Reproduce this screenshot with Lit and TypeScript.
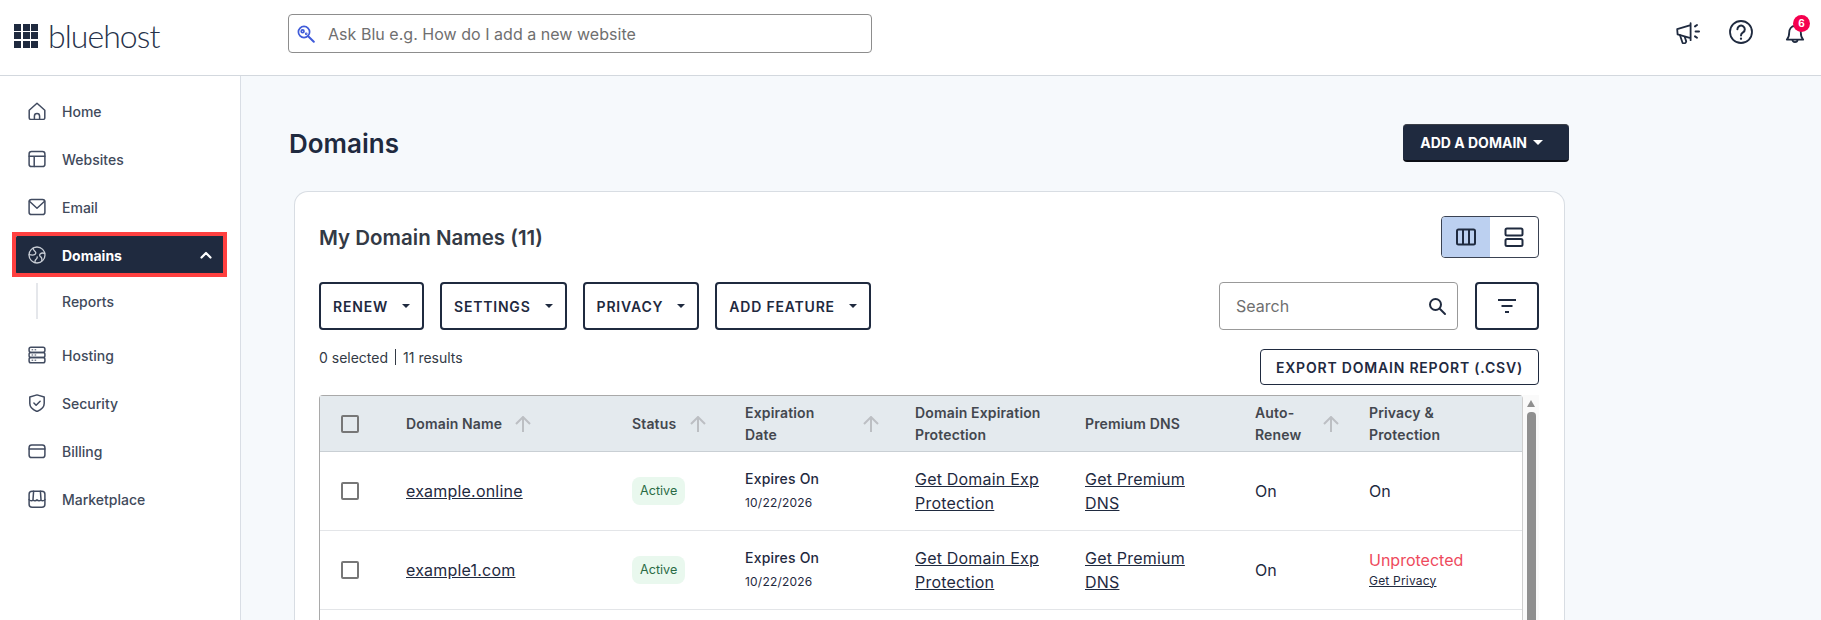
import { LitElement, html, css, svg } from "lit";
import { customElement } from "lit/decorators.js";

const navIcons: Record<string, unknown> = {
  home: svg`<path d="M1.2 8.2 9 1.2l7.8 7v7.6a1.6 1.6 0 0 1-1.6 1.6H2.8a1.6 1.6 0 0 1-1.6-1.6z"/><path d="M6.4 17.4v-3.2a2.6 2.6 0 0 1 5.2 0v3.2"/>`,
  websites: svg`<rect x="1.1" y="1.6" width="15.8" height="15" rx="2.4"/><path d="M1.1 6.2h15.8M6.2 6.2v10.4"/>`,
  email: svg`<rect x="1.1" y="1.6" width="15.8" height="15" rx="2.4"/><path d="M1.4 3.2 9 10.2l7.6-7"/>`,
  globe: svg`<circle cx="9" cy="9" r="8"/><path d="M5 2.2c.2 1.7 1.2 2.5 2.2 3.4 1 1 .6 2.2-.4 2.9-1 .7-3.4.6-5.6.2M16.8 7.4c-1.8-.6-3.6-.4-4.6.6-1 1-.4 2.2.6 2.9 1 .7 1.3 1.9.9 3.5M7 16.7c-.2-1.6.2-2.8 1.1-3.5.8-.7 1.4-1.2 1.1-2.4"/>`,
  hosting: svg`<rect x="1.1" y="1.2" width="15.8" height="5.2" rx="1.8"/><rect x="1.1" y="6.4" width="15.8" height="5.2" rx="1.8"/><rect x="1.1" y="11.6" width="15.8" height="5.2" rx="1.8"/><path d="M4 3.8h.8M7 3.8h.8M4 9h.8M7 9h.8M4 14.2h.8M7 14.2h.8" stroke-width="1"/>`,
  security: svg`<path d="M9 .9 16.2 3v6.6c0 3.6-3 6.3-7.2 7.9-4.2-1.6-7.2-4.3-7.2-7.9V3z"/><path d="m5.9 9 2.2 2.2 4-4"/>`,
  billing: svg`<rect x="1.1" y="3" width="15.8" height="12.6" rx="2.6"/><path d="M1.1 7h15.8"/>`,
  market: svg`<rect x="1.1" y="1.2" width="15.8" height="16" rx="3"/><path d="M1.1 9.6c1.3 1.6 3.1 1.6 4 .2.8 1.3 2.9 1.4 3.9 0 1 1.4 3.1 1.3 3.9 0 .9 1.4 2.7 1.4 4-.2M5.6 1.2 5 9.6M12.4 1.2l.6 8.4"/>`,
};

type NavItem = { label: string; icon: string; active?: boolean; sub?: string };

const navItems: NavItem[] = [
  { label: "Home", icon: "home" },
  { label: "Websites", icon: "websites" },
  { label: "Email", icon: "email" },
  { label: "Domains", icon: "globe", active: true, sub: "Reports" },
  { label: "Hosting", icon: "hosting" },
  { label: "Security", icon: "security" },
  { label: "Billing", icon: "billing" },
  { label: "Marketplace", icon: "market" },
];

// w is the label box, so that the sort arrow lands where it does in the table
const columns = [
  { lines: ["Domain Name"], w: 109, sort: true },
  { lines: ["Status"], w: 58, sort: true },
  { lines: ["Expiration", "Date"], w: 118, sort: true },
  { lines: ["Domain Expiration", "Protection"], w: 150, sort: false },
  { lines: ["Premium DNS"], w: 150, sort: false },
  { lines: ["Auto-", "Renew"], w: 68, sort: true },
  { lines: ["Privacy &", "Protection"], w: 120, sort: false },
];

const rows = [
  { domain: "example.online", date: "10/22/2026", renew: "On", protectedOn: true },
  { domain: "example1.com", date: "10/22/2026", renew: "On", protectedOn: false },
];

@customElement("app-root")
export class AppRoot extends LitElement {
  static styles = css`
    :host {
      display: flex;
      flex-direction: column;
      height: 100vh;
      overflow: hidden;
      font-family: Inter, "Liberation Sans", sans-serif;
      color: #1f2a3f;
      background: #f6f9fc;
    }
    a {
      color: #1f2a3f;
      text-decoration: underline;
      letter-spacing: 0.2px;
    }
    .top {
      flex: none;
      height: 75px;
      box-sizing: content-box;
      border-bottom: 1px solid #d3d8de;
      background: #fff;
      display: flex;
      align-items: center;
      padding: 0 15px 0 14px;
    }
    .logo {
      width: 274px;
      display: flex;
      align-items: center;
      gap: 10px;
      margin-top: 4px;
      margin-bottom: 8px;
    }
    .logo-grid {
      width: 24px;
      height: 24px;
      display: grid;
      grid-template-columns: repeat(3, 1fr);
      gap: 1.5px;
    }
    .logo-grid i {
      background: #1f2a3f;
    }
    .logo-name {
      font-family: Lato, sans-serif;
      font-weight: 300;
      font-size: 32px;
      letter-spacing: -0.95px;
      line-height: 32px;
      color: #27324a;
    }
    .ask {
      width: 584px;
      height: 39px;
      box-sizing: border-box;
      margin-bottom: 8px;
      border: 1px solid #8d8d8d;
      border-radius: 4px;
      display: flex;
      align-items: center;
      padding-left: 8px;
      gap: 13px;
      font-size: 16px;
      letter-spacing: 0.03px;
      color: #6f6f6f;
    }
    .top-icons {
      margin-left: auto;
      margin-bottom: 11px;
      display: flex;
      gap: 29px;
    }
    .top-icons svg {
      display: block;
      width: 24px;
      height: 24px;
      fill: none;
      stroke: #1f2a3f;
      stroke-width: 1.8;
      stroke-linecap: round;
      stroke-linejoin: round;
    }
    .bell {
      position: relative;
    }
    .badge {
      position: absolute;
      left: 11px;
      top: -5px;
      width: 17px;
      height: 17px;
      border-radius: 50%;
      background: #f5004e;
      color: #fff;
      font-size: 10px;
      font-weight: 700;
      line-height: 17px;
      text-align: center;
    }
    .body {
      flex: 1;
      min-height: 0;
      display: flex;
    }
    .side {
      flex: none;
      width: 208px;
      padding: 15px 16px 0;
      background: #fff;
      border-right: 1px solid #d9dee5;
      display: flex;
      flex-direction: column;
      gap: 8px;
    }
    .nav {
      position: relative;
      height: 40px;
      border-radius: 3px;
      padding: 0 12px;
      display: flex;
      align-items: center;
      gap: 16px;
      font-size: 14px;
      font-weight: 500;
      color: #414a5b;
    }
    .nav svg {
      flex: none;
      width: 18px;
      height: 18px;
      fill: none;
      stroke: #414b60;
      stroke-width: 1.5;
      stroke-linecap: round;
      stroke-linejoin: round;
    }
    .nav.active {
      background: #1f2a3f;
      color: #fff;
      font-weight: 700;
    }
    .nav.active svg {
      stroke: #c9ced6;
      stroke-width: 1.3;
    }
    .nav.active .chev {
      margin-left: auto;
      width: 12px;
      height: 8px;
      stroke: #fff;
      stroke-width: 2.2;
    }
    .mark {
      position: absolute;
      top: -3px;
      left: -4px;
      right: -3px;
      bottom: -2px;
      border: 4px solid #ff4040;
    }
    .sub {
      height: 36px;
      margin: 0 0 8px 20px;
      border-left: 2px solid #e5e7eb;
      padding-left: 24px;
      display: flex;
      align-items: center;
      font-size: 14px;
      font-weight: 500;
      color: #414a5b;
    }
    .main {
      flex: 1;
      min-width: 0;
      overflow: hidden;
      padding: 48px 252px 0 48px;
    }
    .title-row {
      height: 38px;
      display: flex;
      align-items: center;
      justify-content: space-between;
    }
    h1 {
      margin: 0;
      font-size: 26px;
      font-weight: 600;
      color: #1f2a3f;
    }
    .add {
      height: 38px;
      box-sizing: border-box;
      padding: 0 26px 0 17px;
      background: #1f2a3f;
      border-radius: 4px;
      border-top: 1px solid #3b3f48;
      border-bottom: 2px solid #0c0f16;
      color: #fff;
      display: flex;
      align-items: center;
      gap: 6px;
      font-size: 14px;
      font-weight: 700;
    }
    .add .caret {
      border-top-color: #fff;
      border-width: 5px 5px 0;
    }
    .caret {
      width: 0;
      height: 0;
      border-style: solid;
      border-color: #1f2a3f transparent transparent;
      border-width: 4px 4px 0;
    }
    .card {
      margin: 29px 4px 0 5px;
      min-height: 600px;
      box-sizing: border-box;
      background: #fff;
      border: 1px solid #d8dde3;
      border-bottom: 0;
      border-radius: 14px 14px 0 0;
      padding: 24px 25px 0 24px;
    }
    .card-head {
      height: 42px;
      display: flex;
      align-items: center;
      justify-content: space-between;
    }
    h2 {
      margin: 0;
      font-size: 20.5px;
      font-weight: 600;
      color: #333a45;
    }
    .toggle {
      width: 98px;
      height: 42px;
      box-sizing: border-box;
      border: 1px solid #3a4252;
      border-radius: 4px;
      overflow: hidden;
      display: flex;
    }
    .toggle div {
      flex: 1;
      display: flex;
      align-items: center;
      justify-content: center;
    }
    .toggle .on {
      background: #bcd0f0;
    }
    .toggle svg {
      width: 20px;
      height: 20px;
      fill: none;
      stroke: #1f2a3f;
      stroke-width: 2;
      stroke-linejoin: round;
    }
    .tools {
      margin-top: 24px;
      height: 48px;
      display: flex;
      gap: 16px;
    }
    .btn {
      box-sizing: border-box;
      height: 48px;
      border: 2px solid #1f2a3f;
      border-radius: 4px;
      padding: 0 12px;
      display: flex;
      align-items: center;
      gap: 14px;
      font-size: 14px;
      font-weight: 600;
      letter-spacing: 0.8px;
      color: #1f2a3f;
    }
    .find {
      margin-left: auto;
      width: 239px;
      box-sizing: border-box;
      border: 1px solid #999;
      border-radius: 4px;
      padding: 0 10px 0 16px;
      display: flex;
      align-items: center;
      justify-content: space-between;
      font-size: 16px;
      color: #6f6f6f;
    }
    .find svg {
      width: 20px;
      height: 20px;
      fill: none;
      stroke: #1f2a3f;
      stroke-width: 2;
      stroke-linecap: round;
    }
    .filter {
      width: 64px;
      padding: 0;
      justify-content: center;
      margin-left: 1px;
    }
    .filter svg {
      width: 18px;
      height: 14px;
      fill: none;
      stroke: #1f2a3f;
      stroke-width: 2;
    }
    .meta {
      margin-top: 19px;
      height: 36px;
      display: flex;
      justify-content: space-between;
      align-items: flex-start;
    }
    .count {
      font-size: 14px;
      color: #333a45;
      display: flex;
      align-items: center;
      height: 16px;
      gap: 7px;
    }
    .count i {
      width: 1px;
      height: 16px;
      background: #333a45;
    }
    .export {
      box-sizing: border-box;
      height: 36px;
      padding: 0 15px;
      border: 1px solid #1f2a3f;
      border-radius: 4px;
      display: flex;
      align-items: center;
      font-size: 14px;
      font-weight: 600;
      letter-spacing: 0.8px;
    }
    .table-wrap {
      margin-top: 10px;
      display: flex;
      min-height: 300px;
    }
    .table {
      flex: 1;
      min-width: 0;
      box-sizing: border-box;
      border: 1px solid #a9a9a9;
      border-right-color: #cfcfcf;
      border-bottom: 0;
      border-radius: 4px 4px 0 0;
    }
    .row {
      display: grid;
      grid-template-columns: 86px 226px 113px 170px 170px 170px 114px 1fr;
      align-items: center;
      height: 78px;
      border-bottom: 1px solid #e3e5e8;
      font-size: 16px;
      color: #1f2a3f;
    }
    .row.head {
      height: 55px;
      background: #e4eaee;
      border-bottom: 1px solid #c9cfd4;
      font-size: 14px;
      line-height: 22px;
      font-weight: 600;
      letter-spacing: 0.15px;
      color: #43474e;
    }
    .th {
      display: flex;
      align-items: center;
    }
    .th svg {
      flex: none;
      width: 16px;
      height: 16px;
      fill: none;
      stroke: #bcbfc3;
      stroke-width: 2;
    }
    .check {
      display: block;
      box-sizing: border-box;
      width: 18px;
      height: 18px;
      margin-left: 21px;
      border: 2px solid #777;
      border-radius: 2px;
      background: #fff;
    }
    .head .check {
      background: transparent;
    }
    .pill {
      display: inline-block;
      padding: 0 8px;
      height: 28px;
      line-height: 27px;
      border-radius: 8px;
      background: #e9f8ee;
      color: #2a6b45;
      font-size: 12.6px;
    }
    .expires {
      font-size: 14px;
      font-weight: 500;
      letter-spacing: 0.2px;
      line-height: 24px;
    }
    .expires small {
      display: block;
      font-size: 12px;
      font-weight: 400;
      letter-spacing: 0.2px;
    }
    .links {
      line-height: 24px;
      padding-right: 40px;
    }
    .off {
      color: #ee4a5d;
      line-height: 24px;
    }
    .get {
      display: block;
      font-size: 12px;
      line-height: 18px;
      margin-bottom: 3px;
    }
    .bar {
      flex: none;
      width: 16px;
      background: #fafafa;
      display: flex;
      flex-direction: column;
      align-items: center;
      padding-top: 5px;
      gap: 5px;
    }
    .bar i {
      width: 0;
      height: 0;
      border-style: solid;
      border-color: transparent transparent #8f8f8f;
      border-width: 0 4px 7px;
    }
    .bar b {
      flex: 1;
      width: 9px;
      border-radius: 4px 4px 0 0;
      background: #8f8f8f;
    }
  `;

  renderNav(item: NavItem) {
    return html`
      <div class="nav ${item.active ? "active" : ""}">
        <svg viewBox="0 0 18 18">${navIcons[item.icon]}</svg>
        <span>${item.label}</span>
        ${item.active
          ? html`<svg class="chev" viewBox="0 0 12 8"><path d="M1.5 6.5 6 2l4.5 4.5" /></svg>
              <div class="mark"></div>`
          : ""}
      </div>
      ${item.sub ? html`<div class="sub">${item.sub}</div>` : ""}
    `;
  }

  renderHeadCell(col: (typeof columns)[number]) {
    return html`<div class="th">
      <div style="width:${col.w}px">${col.lines.map((l) => html`<div>${l}</div>`)}</div>
      ${col.sort ? html`<svg viewBox="0 0 16 16"><path d="M8 16V1.4M1 8l7-7 7 7" /></svg>` : ""}
    </div>`;
  }

  renderRow(r: (typeof rows)[number]) {
    return html`<div class="row">
      <div><span class="check"></span></div>
      <div><a href="#">${r.domain}</a></div>
      <div><span class="pill">Active</span></div>
      <div class="expires">Expires On<small>${r.date}</small></div>
      <div class="links"><a href="#">Get Domain Exp Protection</a></div>
      <div class="links"><a href="#">Get Premium DNS</a></div>
      <div>${r.renew}</div>
      <div>
        ${r.protectedOn
          ? "On"
          : html`<div class="off">Unprotected</div>
              <a class="get" href="#">Get Privacy</a>`}
      </div>
    </div>`;
  }

  render() {
    return html`
      <header class="top">
        <div class="logo">
          <div class="logo-grid">${Array.from({ length: 9 }, () => html`<i></i>`)}</div>
          <span class="logo-name">bluehost</span>
        </div>
        <div class="ask">
          <svg width="18" height="18" viewBox="0 0 18 18" fill="none" stroke="#3f5bd9" stroke-width="1.7" stroke-linecap="round">
            <circle cx="7" cy="7" r="5.6" />
            <path d="m11.2 11.2 5.6 5.6" stroke-width="2" />
            <circle cx="5.6" cy="6.2" r="1.4" />
            <circle cx="9.2" cy="8.8" r=".5" />
          </svg>
          <span>Ask Blu e.g. How do I add a new website</span>
        </div>
        <div class="top-icons">
          <svg viewBox="0 0 24 24">
            <path d="M1.2 9.2 14.6 5.2v13l-13-3.8zM14.6 3.2v17" />
            <path d="M4 15.2 6.6 23c1.5.9 3.4.2 3.6-1.6l-1.5-4.6" />
            <path d="M19 6.4l2-1.4M19.6 11.6H23M19 16.4l2 1.4" stroke-width="2" />
          </svg>
          <svg viewBox="0 0 24 24">
            <circle cx="12" cy="12" r="11" />
            <path d="M8.4 9.2a3.7 3.7 0 1 1 5.6 3.2c-1.3.8-2 1.4-2 3" stroke-width="2" />
            <path d="M12 18.6v.2" stroke-width="2.2" />
          </svg>
          <div class="bell">
            <svg viewBox="0 0 24 24">
              <path d="M4.8 19.6c1.8-1.6 2.4-3.2 2.4-7 0-3.4 2-6.6 5.8-6.6s5.8 3.2 5.8 6.6c0 3.8.6 5.4 2.4 7z" />
              <path d="M10.4 19.8c.2 3 4.9 3 5.2 0" />
            </svg>
            <span class="badge">6</span>
          </div>
        </div>
      </header>
      <div class="body">
        <nav class="side">${navItems.map((n) => this.renderNav(n))}</nav>
        <main class="main">
          <div class="title-row">
            <h1>Domains</h1>
            <div class="add">ADD A DOMAIN <span class="caret"></span></div>
          </div>
          <section class="card">
            <div class="card-head">
              <h2>My Domain Names (11)</h2>
              <div class="toggle">
                <div class="on">
                  <svg viewBox="0 0 20 20"><rect x="1" y="2.5" width="18" height="15" rx="1.5" /><path d="M7 2.5v15M13 2.5v15" /></svg>
                </div>
                <div>
                  <svg viewBox="0 0 20 20"><rect x="1.5" y="1.5" width="17" height="7" rx="1.5" /><rect x="1.5" y="12" width="17" height="7" rx="1.5" /></svg>
                </div>
              </div>
            </div>
            <div class="tools">
              ${["RENEW", "SETTINGS", "PRIVACY", "ADD FEATURE"].map(
                (t) => html`<div class="btn">${t} <span class="caret"></span></div>`,
              )}
              <div class="find">
                <span>Search</span>
                <svg viewBox="0 0 20 20"><circle cx="8.5" cy="8.5" r="5.5" /><path d="m13 13 5 5" /></svg>
              </div>
              <div class="btn filter">
                <svg viewBox="0 0 18 14"><path d="M0 1h18M3.5 7h11M7 13h4" /></svg>
              </div>
            </div>
            <div class="meta">
              <div class="count">0 selected <i></i> 11 results</div>
              <div class="export">EXPORT DOMAIN REPORT (.CSV)</div>
            </div>
            <div class="table-wrap">
              <div class="table">
                <div class="row head">
                  <div><span class="check"></span></div>
                  ${columns.map((c) => this.renderHeadCell(c))}
                </div>
                ${rows.map((r) => this.renderRow(r))}
              </div>
              <div class="bar"><i></i><b></b></div>
            </div>
          </section>
        </main>
      </div>
    `;
  }
}
